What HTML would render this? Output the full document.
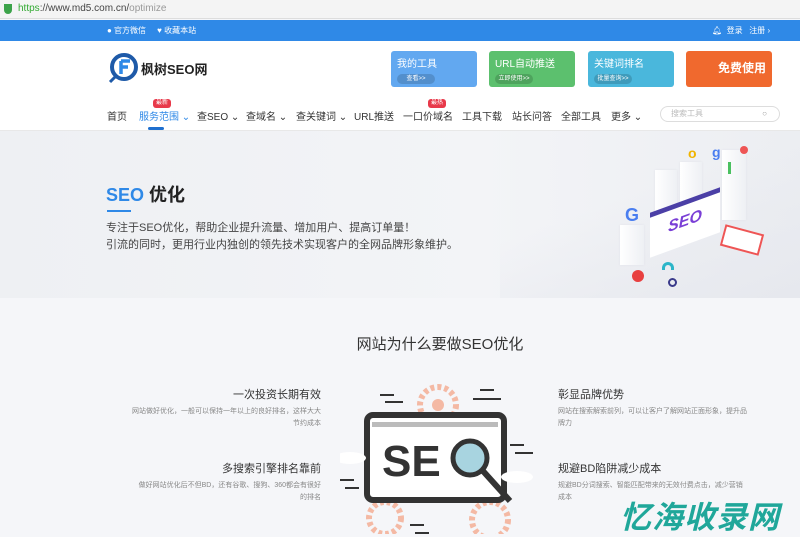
<!DOCTYPE html>
<html><head><meta charset="utf-8"><style>
*{margin:0;padding:0;box-sizing:border-box}
body{width:800px;height:534px;overflow:hidden;background:#f5f6f9;font-family:"Liberation Sans","Noto Sans CJK SC",sans-serif;color:#333;position:relative}
.abs{position:absolute}
.addr{left:0;top:0;width:800px;height:19px;background:#f4f4f4;border-bottom:1px solid #ddd;font-size:10px;line-height:18px;color:#444;padding-left:18px}
.blue{left:0;top:20px;width:800px;height:21px;background:#2f89e7;color:#fff;font-size:8px;line-height:21px}
.hdr{left:0;top:41px;width:800px;height:90px;background:#fff;border-bottom:1px solid #e8e8e8}
.bn{top:51px;width:86px;height:36px;border-radius:3px;color:#fff;font-size:10px;padding:4px 6px}
.bn span{display:block;margin-top:4px;width:38px;height:10px;border-radius:5px;background:rgba(0,0,0,.15);font-size:6px;line-height:10px;text-align:center}
.nav{top:108px;font-size:10px;color:#333}
.hero{left:0;top:131px;width:800px;height:167px;background:linear-gradient(90deg,#eef0f3,#f3f4f7 60%,#eceef2)}
.l{text-align:right;width:200px;left:121px}
.r{left:558px;width:210px}
h4{font-weight:normal;font-size:11px;color:#333}
.d{font-size:7px;color:#888;line-height:12px;margin-top:4px}
.blk{background:linear-gradient(90deg,#fff,#eef0f4);box-shadow:0 0 2px #e0e2e8}
</style></head><body>
<div class="abs addr"><span style="position:absolute;left:4px;top:4px;width:8px;height:10px;background:#3ca34a;border-radius:0 0 4px 4px"></span><span style="color:#3a3">https</span>://www.md5.com.cn/<span style="color:#999">optimize</span></div>
<div class="abs blue"><span style="position:absolute;left:107px">● 官方微信 &nbsp;&nbsp;&nbsp; ♥ 收藏本站</span><span style="position:absolute;left:712px">🔔︎ &nbsp;登录 &nbsp; 注册 ›</span></div>
<div class="abs hdr"></div>
<svg class="abs" style="left:107px;top:52px" width="32" height="32" viewBox="0 0 32 32"><circle cx="17" cy="15" r="12" fill="none" stroke="#1e5aa8" stroke-width="4"/><path d="M14 9h9M14 9v13M14 15h7" stroke="#2f89e7" stroke-width="3.5" fill="none"/><path d="M3 30l6-6" stroke="#1e5aa8" stroke-width="3"/></svg>
<div class="abs" style="left:141px;top:59px;font-size:13px;font-weight:bold;color:#222">枫树SEO网</div>
<div class="abs bn" style="left:391px;background:#62a8f0">我的工具<span>查看>></span></div>
<div class="abs bn" style="left:489px;background:#5cc06e">URL自动推送<span>立即使用>></span></div>
<div class="abs bn" style="left:588px;background:#4ab7dc">关键词排名<span>批量查询>></span></div>
<div class="abs bn" style="left:686px;background:#f0692e;font-weight:bold;font-size:12px;padding-top:8px;text-align:right">免费使用</div>
<div class="abs nav" style="left:107px">首页</div>
<div class="abs nav" style="left:139px;color:#2f89e7">服务范围 ⌄</div>
<div class="abs" style="left:153px;top:99px;width:18px;height:9px;background:#e8394a;border-radius:3px;color:#fff;font-size:6px;line-height:9px;text-align:center">最新</div>
<div class="abs" style="left:148px;top:127px;width:16px;height:3px;background:#1e6fcf;border-radius:2px"></div>
<div class="abs nav" style="left:197px">查SEO ⌄</div>
<div class="abs nav" style="left:246px">查域名 ⌄</div>
<div class="abs nav" style="left:296px">查关键词 ⌄</div>
<div class="abs nav" style="left:354px">URL推送</div>
<div class="abs nav" style="left:403px">一口价域名</div>
<div class="abs" style="left:428px;top:99px;width:18px;height:9px;background:#e8394a;border-radius:3px;color:#fff;font-size:6px;line-height:9px;text-align:center">最热</div>
<div class="abs nav" style="left:462px">工具下载</div>
<div class="abs nav" style="left:512px">站长问答</div>
<div class="abs nav" style="left:561px">全部工具</div>
<div class="abs nav" style="left:611px">更多 ⌄</div>
<div class="abs" style="left:660px;top:106px;width:120px;height:16px;border:1px solid #ddd;border-radius:8px;font-size:8px;color:#bbb;line-height:14px;padding-left:10px">搜索工具<span style="position:absolute;right:12px;color:#999">○</span></div>
<div class="abs hero"></div>
<div class="abs" style="left:500px;top:131px;width:300px;height:167px;background:linear-gradient(160deg,transparent 40%,#e6e8ee)"></div>
<div class="abs blk" style="left:620px;top:225px;width:24px;height:40px"></div>
<div class="abs blk" style="left:655px;top:170px;width:22px;height:60px"></div>
<div class="abs blk" style="left:680px;top:162px;width:22px;height:50px"></div>
<div class="abs blk" style="left:722px;top:150px;width:24px;height:70px"></div>
<div class="abs" style="left:650px;top:200px;width:70px;height:45px;background:#fff;border-top:5px solid #4b3fa6;transform:skewY(-20deg);font-size:16px;font-weight:bold;color:#7a3fd6;text-align:center;line-height:34px;font-style:italic">SEO</div>
<div class="abs" style="left:625px;top:205px;font-size:18px;color:#4a7ef0;font-weight:bold">G</div>
<div class="abs" style="left:688px;top:145px;font-size:14px;color:#f0b400;font-weight:bold">o</div>
<div class="abs" style="left:712px;top:144px;font-size:14px;color:#4a7ef0;font-weight:bold">g</div>
<div class="abs" style="left:728px;top:162px;width:3px;height:12px;background:#4ac060"></div>
<div class="abs" style="left:740px;top:146px;width:8px;height:8px;border-radius:50%;background:#e55"></div>
<div class="abs" style="left:722px;top:229px;width:40px;height:22px;background:#fff;border:2px solid #e55;transform:rotate(15deg)"></div>
<div class="abs" style="left:662px;top:262px;width:12px;height:8px;border-radius:6px 6px 0 0;border:3px solid #2cb5c8;border-bottom:none"></div>
<div class="abs" style="left:632px;top:270px;width:12px;height:12px;border-radius:50%;background:#e84040"></div>
<div class="abs" style="left:668px;top:278px;width:9px;height:9px;border-radius:50%;border:2px solid #3a3a8a"></div>
<div class="abs" style="left:106px;top:181px;font-size:18px;font-weight:bold;color:#222"><span style="color:#2f89e7">SEO</span> 优化</div>
<div class="abs" style="left:107px;top:210px;width:24px;height:2px;background:#2f89e7"></div>
<div class="abs" style="left:106px;top:220px;font-size:11px;line-height:17px;color:#444">专注于SEO优化，帮助企业提升流量、增加用户、提高订单量！<br>引流的同时，更用行业内独创的领先技术实现客户的全网品牌形象维护。</div>
<div class="abs" style="left:0;top:333px;width:880px;text-align:center;font-size:15px;color:#333">网站为什么要做SEO优化</div>
<div class="abs l" style="top:386px"><h4>一次投资长期有效</h4><div class="d">网站做好优化，一般可以保持一年以上的良好排名，这样大大<br>节约成本</div></div>
<div class="abs l" style="top:460px"><h4>多搜索引擎排名靠前</h4><div class="d">做好网站优化后不但BD，还有谷歌、搜狗、360都会有很好<br>的排名</div></div>
<div class="abs r" style="top:386px"><h4>彰显品牌优势</h4><div class="d">网站在搜索解索前列，可以让客户了解网站正面形象，提升品<br>牌力</div></div>
<div class="abs r" style="top:460px"><h4>规避BD陷阱减少成本</h4><div class="d">规避BD分词搜索、智能匹配带来的无效付费点击，减少营销<br>成本</div></div>
<svg class="abs" style="left:340px;top:370px" width="200" height="164" viewBox="0 0 200 164">
<circle cx="98" cy="35" r="18" fill="none" stroke="#f4b9a4" stroke-width="6" stroke-dasharray="4 3"/>
<circle cx="98" cy="35" r="6" fill="#f4b9a4"/>
<circle cx="45" cy="148" r="16" fill="none" stroke="#f4b9a4" stroke-width="6" stroke-dasharray="4 3"/>
<circle cx="150" cy="150" r="18" fill="none" stroke="#f4b9a4" stroke-width="6" stroke-dasharray="4 3"/>
<rect x="27" y="45" width="137" height="85" rx="6" fill="#fff" stroke="#333" stroke-width="6"/>
<rect x="32" y="52" width="126" height="5" fill="#bbb"/>
<ellipse cx="10" cy="88" rx="16" ry="6" fill="#fff"/>
<ellipse cx="177" cy="107" rx="16" ry="6" fill="#fff"/>
<text x="42" y="106" font-family="Liberation Sans" font-weight="bold" font-size="44" fill="#333">SE</text>
<circle cx="130" cy="88" r="17" fill="#a8d4e0" stroke="#333" stroke-width="5"/>
<path d="M143 101l27 30" stroke="#333" stroke-width="6"/>
<path d="M40 25h14M45 32h18M140 20h14M133 29h28M170 75h14M175 83h18M70 155h14M75 163h14M0 110h14M5 118h14" stroke="#333" stroke-width="2"/>
</svg>
<div class="abs" style="left:620px;top:492px;font-size:31px;font-weight:bold;font-style:italic;color:#20a79a;letter-spacing:1px">忆海收录网</div>
</body></html>
